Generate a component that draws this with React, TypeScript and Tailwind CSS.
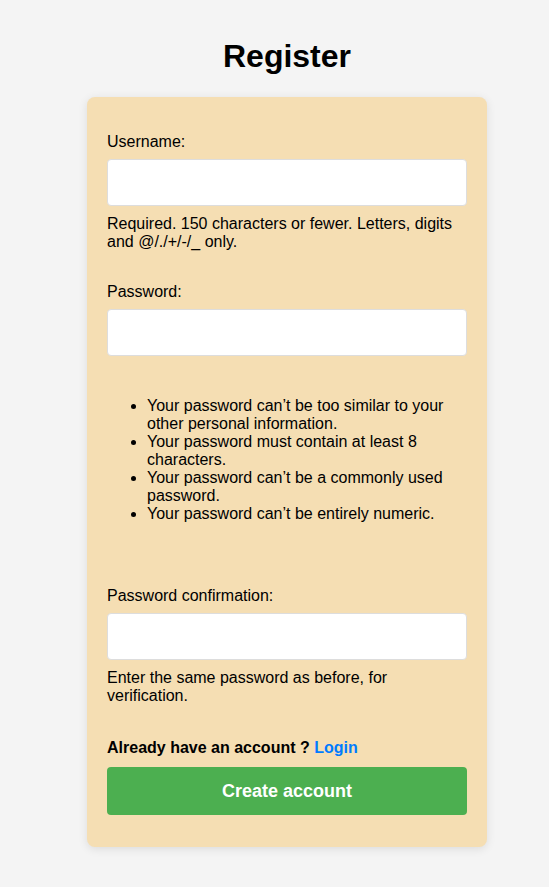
import React from "react";

export default function App() {
  const input =
    "block w-[360px] h-[47px] bg-white border border-[#dddddd] rounded-[4px] px-3";
  return (
    <div className="min-h-[887px] bg-[#f4f4f4] font-['Liberation_Sans',Arial,sans-serif] text-black text-[16px] leading-[18px] pt-[38px]">
      <div className="w-[400px] ml-[87px]">
        <h1 className="text-[32px] leading-[37px] font-bold text-center mb-[22px]">Register</h1>
        <div className="bg-[#f5deb3] rounded-[8px] shadow-[0_2px_10px_rgba(0,0,0,0.1)] px-5 pt-[36px] pb-[32px]">
          <label className="block">Username:</label>
          <input type="text" className={`${input} mt-2`} />
          <div className="mt-[9px]">
            Required. 150 characters or fewer. Letters, digits and @/./+/-/_ only.
          </div>

          <label className="block mt-[32px]">Password:</label>
          <input type="password" className={`${input} mt-2`} />
          <ul className="list-disc pl-[40px] mt-[41px]">
            <li>Your password can’t be too similar to your other personal information.</li>
            <li>Your password must contain at least 8 characters.</li>
            <li>Your password can’t be a commonly used password.</li>
            <li>Your password can’t be entirely numeric.</li>
          </ul>

          <label className="block mt-[64px]">Password confirmation:</label>
          <input type="password" className={`${input} mt-2`} />
          <div className="mt-[9px]">Enter the same password as before, for verification.</div>

          <p className="font-bold mt-[34px]">
            Already have an account ? <a href="#" className="text-[#007bff]">Login</a>
          </p>
          <button className="mt-[10px] w-[360px] h-[48px] bg-[#4caf50] text-white text-[18px] font-bold rounded-[4px]">
            Create account
          </button>
        </div>
      </div>
    </div>
  );
}
